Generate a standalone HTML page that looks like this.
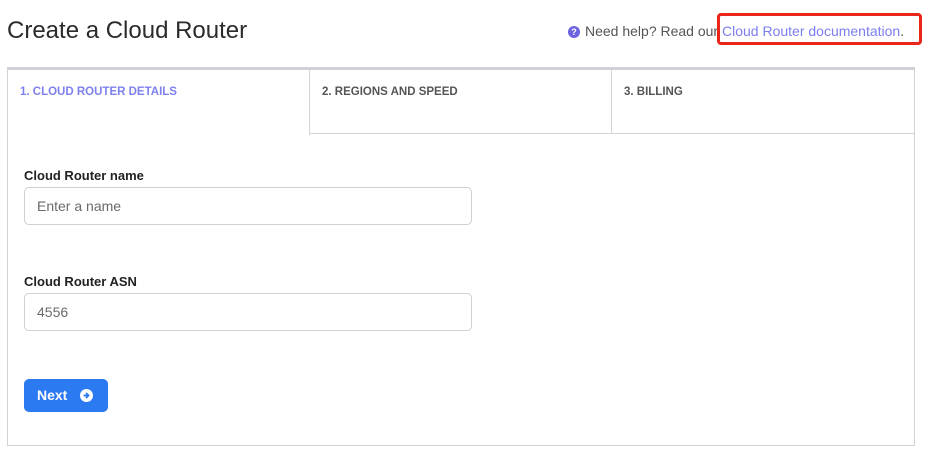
<!DOCTYPE html>
<html><head><style>
body{margin:0;width:930px;height:456px;background:#fff;font-family:"Liberation Sans",sans-serif;position:relative;overflow:hidden}
.a{position:absolute}
h1{position:absolute;left:7px;top:17px;margin:0;font-size:24px;font-weight:normal;color:#2b2b2b}
.help{left:568px;top:23px;font-size:14px;color:#555;white-space:nowrap}
.lk{color:#7b7ef0}
.q{display:inline-block;width:12px;height:12px;border-radius:50%;background:#6c63e0;color:#fff;font-size:9px;font-weight:bold;text-align:center;line-height:12px;vertical-align:1px;margin-right:5px}
.red{left:717px;top:13px;width:205px;height:32px;border:3px solid #e8261a;border-radius:4px;box-sizing:border-box}
.tab{top:67px;height:67px;border-top:3px solid #d0d1d6;border-right:1px solid #d3d3d8;box-sizing:border-box;font-size:11.5px;font-weight:bold;color:#555;padding:16px 0 0 12px}
.panel{left:7px;top:67px;width:908px;height:379px;border:1px solid #d3d3d6;border-top:none;box-sizing:border-box}
label{position:absolute;left:24px;font-size:13px;font-weight:bold;color:#222}
.in{left:24px;width:448px;height:38px;border:1px solid #cfd0d4;border-radius:5px;box-sizing:border-box;font-size:14px;color:#6a6a6a;padding:10px 12px}
.btn{left:24px;top:379px;width:84px;height:33px;background:#2c7af2;border-radius:5px;color:#fff;font-weight:bold;font-size:14px}
</style></head><body>
<h1>Create a Cloud Router</h1>
<div class="a help"><span class="q">?</span>Need help? Read our <span class="lk">Cloud Router documentation</span>.</div>
<div class="a red"></div>
<div class="a panel"></div>
<div class="a tab" style="left:7px;width:303px;height:68px;border-left:1px solid #d3d3d8;color:#7e80ee;background:#fff">1. CLOUD ROUTER DETAILS</div>
<div class="a tab" style="left:310px;width:302px;border-bottom:1px solid #d3d3d8">2. REGIONS AND SPEED</div>
<div class="a tab" style="left:612px;width:303px;border-bottom:1px solid #d3d3d8">3. BILLING</div>
<label style="top:168px">Cloud Router name</label>
<div class="a in" style="top:187px">Enter a name</div>
<label style="top:274px">Cloud Router ASN</label>
<div class="a in" style="top:293px">4556</div>
<div class="a btn"><span class="a" style="left:13px;top:8px">Next</span>
<svg class="a" style="left:56px;top:10px" width="13" height="13" viewBox="0 0 13 13"><circle cx="6.5" cy="6.5" r="6.5" fill="#fff"/><path d="M3.5 6.5h5M6 4l2.5 2.5L6 9" stroke="#2c7af2" stroke-width="1.8" fill="none"/></svg></div>
</body></html>
